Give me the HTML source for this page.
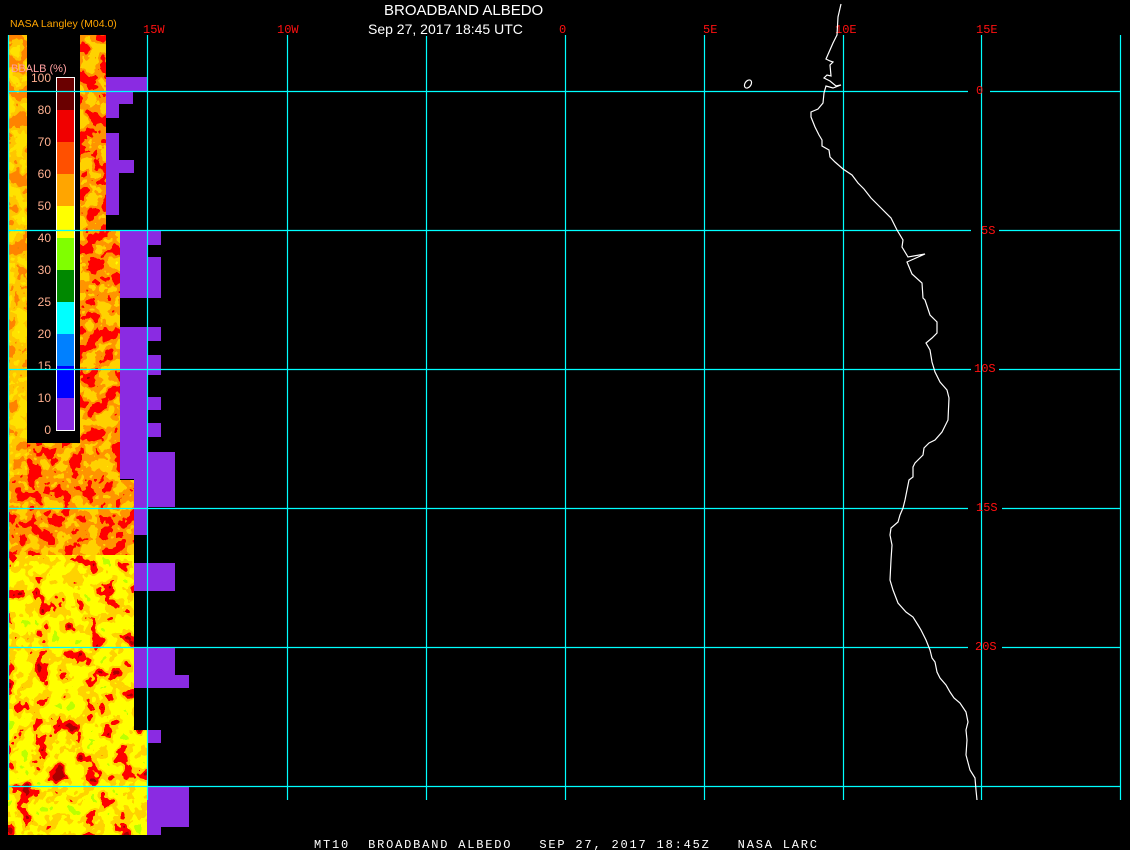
<!DOCTYPE html>
<html><head><meta charset="utf-8"><style>
html,body{margin:0;padding:0;background:#000;width:1130px;height:850px;overflow:hidden}
svg{display:block}
text{white-space:pre}
.lab{font-family:"Liberation Mono",monospace;font-size:12px;fill:#ff1010}
.leg{font-family:"Liberation Sans",sans-serif;font-size:12px;fill:#ffb090}
</style></head><body>
<svg width="1130" height="850" viewBox="0 0 1130 850" xmlns="http://www.w3.org/2000/svg" xml:space="preserve">
<defs>
<filter id="n1" x="0" y="0" width="100%" height="100%">
<feTurbulence type="fractalNoise" baseFrequency="0.07" numOctaves="3" seed="4"/>
<feColorMatrix type="matrix" values="1 0 0 0 0 1 0 0 0 0 1 0 0 0 0 0 0 0 0 1"/>
<feComponentTransfer>
<feFuncR type="discrete" tableValues="0.4 1 1 1 1 1 1"/>
<feFuncG type="discrete" tableValues="0 0 0 0.3 0.65 0.65 1"/>
<feFuncB type="discrete" tableValues="0 0 0 0 0 0 0"/>
<feFuncA type="discrete" tableValues="1"/>
</feComponentTransfer>
</filter>
<filter id="n2" x="0" y="0" width="100%" height="100%">
<feTurbulence type="fractalNoise" baseFrequency="0.06" numOctaves="3" seed="9"/>
<feColorMatrix type="matrix" values="1 0 0 0 0 1 0 0 0 0 1 0 0 0 0 0 0 0 0 1"/>
<feComponentTransfer>
<feFuncR type="discrete" tableValues="0.4 0.4 1 1 1 1 0.5 0.5"/>
<feFuncG type="discrete" tableValues="0 0 0 0.65 1 1 1 1"/>
<feFuncB type="discrete" tableValues="0 0 0 0 0 0 0 0"/>
<feFuncA type="discrete" tableValues="1"/>
</feComponentTransfer>
</filter>
<clipPath id="strip"><polygon points="8,35 106,35 106,230 120,230 120,480 134,480 134,730 147,730 147,835 8,835"/></clipPath>
</defs>
<g clip-path="url(#strip)">
<rect x="8" y="35" width="140" height="520" filter="url(#n1)"/>
<rect x="8" y="555" width="140" height="280" filter="url(#n2)"/>
<rect x="8" y="35" width="19" height="440" fill="#ffee00" opacity="0.55"/>
</g>
<rect x="27" y="35" width="53" height="408" fill="#000"/>
<g fill="#8a2be2">
<rect x="106" y="77" width="41" height="14"/><rect x="106" y="91" width="27" height="13"/><rect x="106" y="104" width="13" height="14"/>
<rect x="106" y="133" width="13" height="27"/><rect x="106" y="160" width="28" height="13"/><rect x="106" y="173" width="13" height="42"/>
<rect x="120" y="230" width="41" height="15"/><rect x="120" y="245" width="27" height="12"/><rect x="120" y="257" width="41" height="41"/>
<rect x="120" y="327" width="41" height="14"/><rect x="120" y="341" width="27" height="14"/><rect x="120" y="355" width="41" height="20"/>
<rect x="120" y="375" width="27" height="22"/><rect x="120" y="397" width="41" height="13"/><rect x="120" y="410" width="27" height="13"/>
<rect x="120" y="423" width="41" height="14"/><rect x="120" y="437" width="27" height="15"/><rect x="120" y="452" width="55" height="27"/>
<rect x="147" y="479" width="28" height="28"/><rect x="134" y="479" width="13" height="56"/>
<rect x="134" y="563" width="41" height="28"/><rect x="134" y="647" width="41" height="28"/><rect x="134" y="675" width="55" height="13"/>
<rect x="147" y="730" width="14" height="13"/><rect x="147" y="786" width="42" height="41"/><rect x="147" y="827" width="14" height="8"/>
</g>
<rect x="56" y="78" width="18" height="32" fill="#6a0000"/>
<rect x="56" y="110" width="18" height="32" fill="#f00000"/>
<rect x="56" y="142" width="18" height="32" fill="#ff5000"/>
<rect x="56" y="174" width="18" height="32" fill="#ffa500"/>
<rect x="56" y="206" width="18" height="32" fill="#ffff00"/>
<rect x="56" y="238" width="18" height="32" fill="#80ff00"/>
<rect x="56" y="270" width="18" height="32" fill="#008800"/>
<rect x="56" y="302" width="18" height="32" fill="#00ffff"/>
<rect x="56" y="334" width="18" height="32" fill="#0080ff"/>
<rect x="56" y="366" width="18" height="32" fill="#0000ff"/>
<rect x="56" y="398" width="18" height="32" fill="#8a2be2"/>
<rect x="56.5" y="77.5" width="18" height="353" fill="none" stroke="#fff" stroke-width="1"/>
<g class="leg" text-anchor="end">
<text x="51" y="82">100</text><text x="51" y="114">80</text><text x="51" y="146">70</text><text x="51" y="178">60</text>
<text x="51" y="210">50</text><text x="51" y="242">40</text><text x="51" y="274">30</text><text x="51" y="306">25</text>
<text x="51" y="338">20</text><text x="51" y="370">15</text><text x="51" y="402">10</text><text x="51" y="434">0</text>
</g>
<text x="11" y="72" class="leg" style="fill:#ffa0a0;font-size:11px">BBALB (%)</text>
<text x="10" y="27" style="font-family:'Liberation Sans',sans-serif;font-size:10.5px;fill:#ffa500">NASA Langley (M04.0)</text>
<g stroke="#00ffff" stroke-width="1.2">
<line x1="8.5" y1="35" x2="8.5" y2="800"/><line x1="147.5" y1="35" x2="147.5" y2="800"/>
<line x1="287.5" y1="35" x2="287.5" y2="800"/><line x1="426.5" y1="35" x2="426.5" y2="800"/>
<line x1="565.5" y1="35" x2="565.5" y2="800"/><line x1="704.5" y1="35" x2="704.5" y2="800"/>
<line x1="843.5" y1="35" x2="843.5" y2="800"/><line x1="981.5" y1="35" x2="981.5" y2="800"/>
<line x1="1120.5" y1="35" x2="1120.5" y2="800"/>
<line x1="8" y1="91.5" x2="968" y2="91.5"/><line x1="990" y1="91.5" x2="1121" y2="91.5"/>
<line x1="8" y1="230.5" x2="971" y2="230.5"/><line x1="999" y1="230.5" x2="1121" y2="230.5"/>
<line x1="8" y1="369.5" x2="971" y2="369.5"/><line x1="999" y1="369.5" x2="1121" y2="369.5"/>
<line x1="8" y1="508.5" x2="968" y2="508.5"/><line x1="1002" y1="508.5" x2="1121" y2="508.5"/>
<line x1="8" y1="647.5" x2="968" y2="647.5"/><line x1="1002" y1="647.5" x2="1121" y2="647.5"/>
<line x1="8" y1="786.5" x2="1121" y2="786.5"/>
</g>
<g class="lab">
<text x="143" y="33">15W</text><text x="277" y="33">10W</text><text x="420" y="33">5W</text><text x="559" y="33">0</text>
<text x="703" y="33">5E</text><text x="835" y="33">10E</text><text x="976" y="33">15E</text>
<text x="976" y="94">0</text><text x="981" y="234">5S</text><text x="974" y="372">10S</text>
<text x="976" y="511">15S</text><text x="975" y="650">20S</text>
</g>
<rect x="366" y="20" width="160" height="16" fill="#000"/>
<text x="384" y="15" style="font-family:'Liberation Sans',sans-serif;font-size:15px;fill:#fff">BROADBAND ALBEDO</text>
<text x="368" y="34" style="font-family:'Liberation Sans',sans-serif;font-size:14px;fill:#fff">Sep 27, 2017 18:45 UTC</text>
<polyline fill="none" stroke="#fff" stroke-width="1.2" points="841,4 838,17 837,35 833,43 826,59 830,61 833,62 830,65 831,76 827,75 824,78 830,81 836,86 841,85 833,88 826,86 824,93 823,103 818,109 811,112 811,117 815,127 819,135 822,140 822,146 829,150 830,157 835,162 843,169 852,175 858,183 864,189 871,198 880,207 891,218 897,230 903,240 902,247 908,257 925,254 907,262 912,274 922,283 923,298 925,300 930,315 937,322 937,333 932,338 926,343 930,350 932,362 935,372 940,382 947,390 949,398 948,420 942,432 935,440 929,443 924,448 923,455 915,463 913,467 913,477 909,480 907,490 905,500 903,508 900,515 898,522 891,528 890,535 892,545 891,560 890,580 893,590 898,603 906,612 913,617 918,625 921,630 926,640 930,650 932,658 935,662 937,672 940,678 946,685 950,692 954,698 960,703 966,712 968,722 966,730 967,740 966,755 970,770 975,778 976,790 977,800"/>
<ellipse cx="748" cy="84" rx="3" ry="4.5" transform="rotate(35 748 84)" fill="none" stroke="#fff" stroke-width="1.2"/>
<text x="314" y="848" textLength="503" lengthAdjust="spacing" style="font-family:'Liberation Mono',monospace;font-size:12px;fill:#fff">MT10  BROADBAND ALBEDO   SEP 27, 2017 18:45Z   NASA LARC</text>
</svg>
</body></html>
